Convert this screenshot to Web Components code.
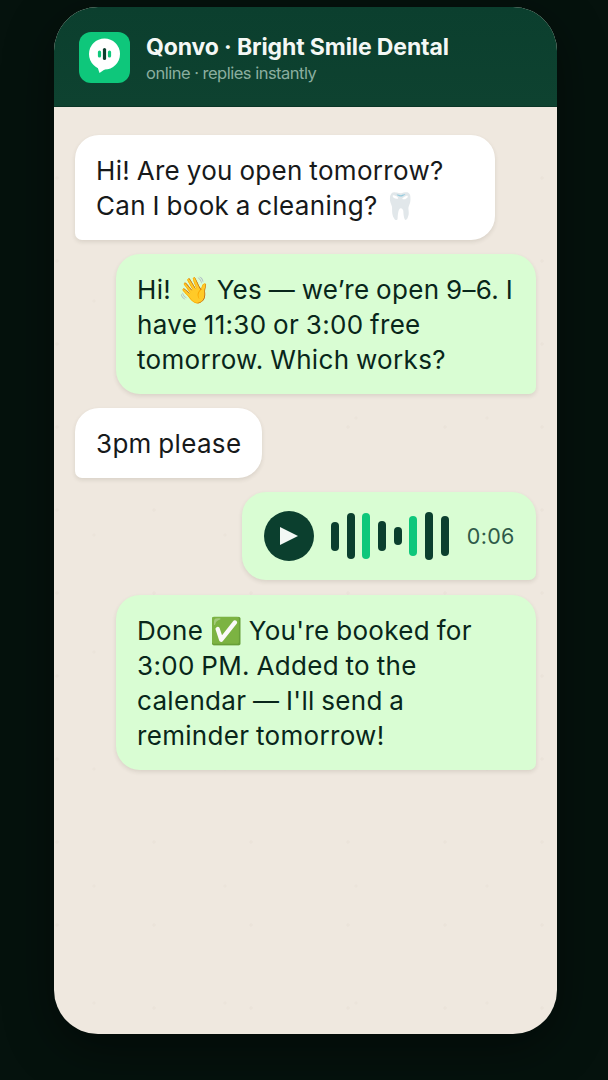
<!DOCTYPE html>
<html><head><meta charset="utf-8"><style>
html,body{margin:0;height:100%;background:#05120d}
body{width:608px;height:1080px;overflow:hidden;font-family:Inter,"Noto Sans",sans-serif}
</style></head><body>
<template id="phone-t"><style>
:host{display:flex;flex-direction:column;box-sizing:border-box;width:503px;height:1027px;margin:7px 0 0 54px;border-radius:44px;overflow:hidden;background-color:#efe8df;background-image:radial-gradient(circle at 3px 5px,rgba(120,100,70,.035) 1.2px,transparent 2px),radial-gradient(circle at 40px 60px,rgba(120,100,70,.03) 1.2px,transparent 2px);background-size:97px 83px,131px 117px;box-shadow:0 14px 50px rgba(0,0,0,.45)}
.body{flex:1;display:flex;flex-direction:column;gap:14px;padding:28px 21px}
</style><slot name="header"></slot><div class="body"><slot></slot></div></template>
<template id="head-t"><style>
:host{display:flex;align-items:center;gap:16px;height:100px;flex:none;padding:1px 25px 0;box-sizing:border-box;background:linear-gradient(#0b3f2e,#0e4230);border-bottom:1px solid #0a3526}
.logo{width:51px;height:51px;flex:none;border-radius:12px;background:#0ec77b}
svg{display:block}
.txt{padding-top:2px}
.t{font-size:23px;font-weight:700;color:#f4f8f5;line-height:30px;letter-spacing:-.12px;white-space:nowrap}
.s{font-size:16.5px;color:#8aae9f;line-height:22px;white-space:nowrap;letter-spacing:-.5px}
</style><div class="logo"><svg width="51" height="51" viewBox="0 0 51 51"><circle cx="25.5" cy="22" r="15.5" fill="#fff"/><path d="M18.5 35L20.5 41L27 36.5Z" fill="#fff"/><rect x="18.9" y="18.5" width="3.2" height="7" rx="1.6" fill="#0ec77b"/><rect x="23.9" y="16" width="3.2" height="12" rx="1.6" fill="#0b3f2e"/><rect x="28.9" y="18.5" width="3.2" height="7" rx="1.6" fill="#0ec77b"/></svg></div><div class="txt"><div class="t"><slot name="title"></slot></div><div class="s"><slot name="sub"></slot></div></div></template>
<template id="bub-t"><style>
:host{display:block;box-sizing:border-box;max-width:420px;padding:17.5px 21px;font-size:26px;font-weight:400;line-height:35px;color:#17191a;background:#fff;border-radius:24px 24px 24px 7px;box-shadow:0 2px 4px rgba(60,50,30,.12);align-self:flex-start;letter-spacing:.32px;word-spacing:-1px}
:host([me]){align-self:flex-end;background:#d9fdd3;border-radius:24px 24px 7px 24px;color:#08261a;width:420px}
</style><slot></slot></template>
<template id="voice-t"><style>
:host{display:flex;align-items:center;gap:18px;box-sizing:border-box;width:294px;height:88px;margin-bottom:1px;padding:0 22px;align-self:flex-end;background:#d9fdd3;border-radius:24px 24px 7px 24px;box-shadow:0 2px 4px rgba(60,50,30,.12)}
.play{width:50px;height:50px;border-radius:50%;background:#0b3f2e;flex:none;display:flex;align-items:center;justify-content:center;margin-right:-1px}
.w{display:flex;align-items:center;gap:7.7px}
i{display:block;width:8px;border-radius:4px;background:#0b3f2e}
i.g{background:#0ec77b}
.d{font-size:21.5px;color:#2f5a49;letter-spacing:.3px}
</style><div class="play"><svg width="18" height="18" viewBox="0 0 18 18"><path d="M0 0L18 9L0 18Z" fill="#f4f8f5"/></svg></div><div class="w"><i style="height:29px"></i><i style="height:46px"></i><i class="g" style="height:46px"></i><i style="height:30px"></i><i style="height:18px"></i><i class="g" style="height:40px"></i><i style="height:48px"></i><i style="height:40px"></i></div><div class="d"><slot></slot></div></template>
<x-phone>
<x-head slot="header"><span slot="title">Qonvo · Bright Smile Dental</span><span slot="sub">online · replies instantly</span></x-head>
<x-bub>Hi! Are you open tomorrow? Can I book a cleaning? 🦷</x-bub>
<x-bub me>Hi! 👋 Yes — we’re open 9–6. I have 11:30 or 3:00 free tomorrow. Which works?</x-bub>
<x-bub>3pm please</x-bub>
<x-voice>0:06</x-voice>
<x-bub me>Done ✅ You're booked for 3:00 PM. Added to the calendar — I'll send a reminder tomorrow!</x-bub>
</x-phone>
<script>
for(const [n,t] of [['x-phone','phone-t'],['x-head','head-t'],['x-bub','bub-t'],['x-voice','voice-t']])
customElements.define(n,class extends HTMLElement{constructor(){super();this.attachShadow({mode:'open'}).appendChild(document.getElementById(t).content.cloneNode(true))}});
</script></body></html>
